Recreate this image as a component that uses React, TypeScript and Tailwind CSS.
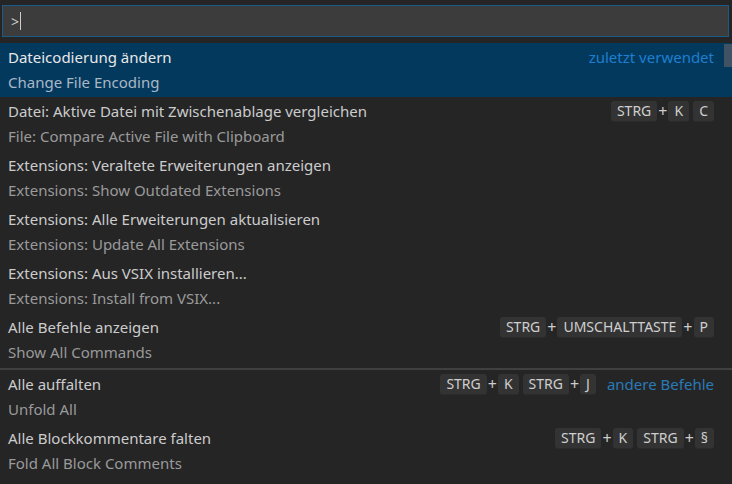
import React from "react";

type Item = {
  label: string;
  desc: string;
  keys?: string[][];
  right?: string;
  selected?: boolean;
  sepBefore?: boolean;
};

const items: Item[] = [
  { label: "Dateicodierung ändern", desc: "Change File Encoding", right: "zuletzt verwendet", selected: true },
  { label: "Datei: Aktive Datei mit Zwischenablage vergleichen", desc: "File: Compare Active File with Clipboard", keys: [["STRG", "K"], ["C"]] },
  { label: "Extensions: Veraltete Erweiterungen anzeigen", desc: "Extensions: Show Outdated Extensions" },
  { label: "Extensions: Alle Erweiterungen aktualisieren", desc: "Extensions: Update All Extensions" },
  { label: "Extensions: Aus VSIX installieren...", desc: "Extensions: Install from VSIX..." },
  { label: "Alle Befehle anzeigen", desc: "Show All Commands", keys: [["STRG", "UMSCHALTTASTE", "P"]] },
  { label: "Alle auffalten", desc: "Unfold All", keys: [["STRG", "K"], ["STRG", "J"]], right: "andere Befehle", sepBefore: true },
  { label: "Alle Blockkommentare falten", desc: "Fold All Block Comments", keys: [["STRG", "K"], ["STRG", "§"]] },
];

function Keys({ chords }: { chords: string[][] }) {
  return (
    <div className="flex items-center gap-[4px] -mt-[5px]">
      {chords.map((chord, ci) => (
        <div key={ci} className="flex items-center">
          {chord.map((k, ki) => (
            <React.Fragment key={ki}>
              {ki > 0 && <span className="mx-[1px] text-[16px] text-[#cccccc] leading-none">+</span>}
              <span className="h-[21px] px-[6px] flex items-center rounded-[3px] bg-[#333333] border-b border-[#2b2b2b] text-[14px] text-[#cfcfcf] leading-none">
                {k}
              </span>
            </React.Fragment>
          ))}
        </div>
      ))}
    </div>
  );
}

export default function App() {
  return (
    <div
      className="w-[732px] h-[484px] bg-[#252526] overflow-hidden relative"
      style={{ fontFamily: '"Noto Sans", "Open Sans", sans-serif' }}
    >
      <div className="pt-[5px] px-[2px] pr-[3px]">
        <div className="h-[32px] border border-[#1a5a86] bg-[#3c3c3c] flex items-center pl-[8px]">
          <span className="text-[14px] text-[#cccccc]">&gt;</span>
          <span className="w-[1px] h-[18px] bg-[#cccccc] ml-[1px]" />
        </div>
      </div>
      <div className="mt-[6px] relative">
        <div className="absolute right-0 top-[1px] w-[8px] h-[23px] bg-[#4f5a66] opacity-80" />
        {items.map((it, i) => (
          <React.Fragment key={i}>
            {it.sepBefore && <div className="h-[2px] mt-[1px] bg-[#404040]" />}
            <div
              className={
                "h-[54px] pl-[8px] pr-[18px] pt-[2px] flex justify-between " +
                (it.selected ? "bg-[#04395e]" : "")
              }
            >
              <div className="flex flex-col">
                <div className={"h-[25px] leading-[25px] text-[15px] whitespace-nowrap " + (it.selected ? "text-[#e8e8e8]" : "text-[#cccccc]")}>
                  {it.label}
                </div>
                <div className={"h-[25px] leading-[25px] text-[15px] whitespace-nowrap " + (it.selected ? "text-[#a9b8c6]" : "text-[#9a9a9a]")}>
                  {it.desc}
                </div>
              </div>
              <div className="h-[25px] flex items-center gap-[11px] pt-[4px]">
                {it.keys && <Keys chords={it.keys} />}
                {it.right && (
                  <span className={"text-[15px] whitespace-nowrap -mt-[4px] " + (it.selected ? "text-[#1c7fd0]" : "text-[#2a7ab8]")}>
                    {it.right}
                  </span>
                )}
              </div>
            </div>
          </React.Fragment>
        ))}
      </div>
    </div>
  );
}
